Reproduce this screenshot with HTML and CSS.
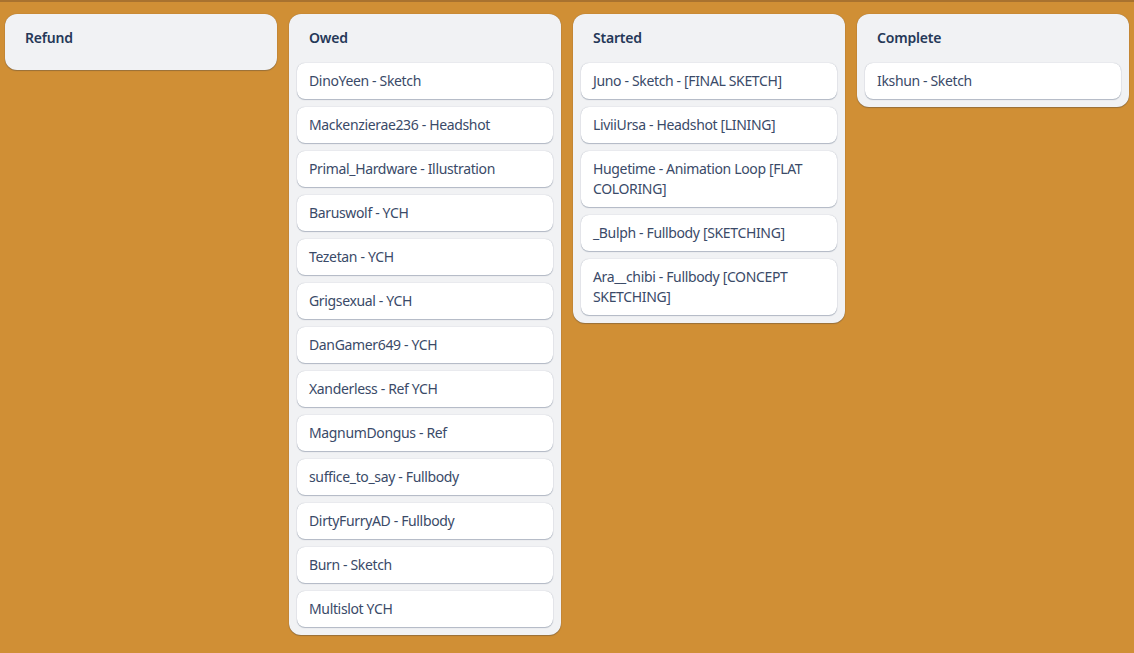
FILE: index.html
```html
<!DOCTYPE html>
<html>
<head>
<meta charset="utf-8">
<link rel="stylesheet" href="styles.css">
</head>
<body>
<div class="topbar"></div>
<main class="board">
  <section class="list">
    <h2 class="list-title">Refund</h2>
  </section>
  <section class="list">
    <h2 class="list-title">Owed</h2>
    <ol class="cards">
      <li class="card">DinoYeen - Sketch</li>
      <li class="card">Mackenzierae236 - Headshot</li>
      <li class="card">Primal_Hardware - Illustration</li>
      <li class="card">Baruswolf - YCH</li>
      <li class="card">Tezetan - YCH</li>
      <li class="card">Grigsexual - YCH</li>
      <li class="card">DanGamer649 - YCH</li>
      <li class="card">Xanderless - Ref YCH</li>
      <li class="card">MagnumDongus - Ref</li>
      <li class="card">suffice_to_say - Fullbody</li>
      <li class="card">DirtyFurryAD - Fullbody</li>
      <li class="card">Burn - Sketch</li>
      <li class="card">Multislot YCH</li>
    </ol>
  </section>
  <section class="list">
    <h2 class="list-title">Started</h2>
    <ol class="cards">
      <li class="card">Juno - Sketch - [FINAL SKETCH]</li>
      <li class="card">LiviiUrsa - Headshot [LINING]</li>
      <li class="card">Hugetime - Animation Loop [FLAT COLORING]</li>
      <li class="card">_Bulph - Fullbody [SKETCHING]</li>
      <li class="card">Ara__chibi - Fullbody [CONCEPT SKETCHING]</li>
    </ol>
  </section>
  <section class="list">
    <h2 class="list-title">Complete</h2>
    <ol class="cards">
      <li class="card">Ikshun - Sketch</li>
    </ol>
  </section>
</main>
</body>
</html>
```

FILE: styles.css
```css
html, body {
  margin: 0;
  padding: 0;
  height: 100%;
}
body {
  background: #d08f35;
  font-family: "Noto Sans", "Open Sans", sans-serif;
  color: #172b4d;
  overflow: hidden;
}
.topbar {
  height: 2px;
  background: #a8722f;
}
.board {
  display: flex;
  align-items: flex-start;
  gap: 12px;
  padding: 12px 5px;
}
.list {
  width: 272px;
  flex: 0 0 272px;
  background: #f1f2f4;
  border-radius: 12px;
  box-shadow: 0 1px 1px rgba(9, 30, 66, 0.25), 0 0 1px rgba(9, 30, 66, 0.31);
  padding-bottom: 8px;
}
.list-title {
  margin: 0;
  height: 48px;
  box-sizing: border-box;
  padding: 14px 20px 0;
  font-size: 14px;
  line-height: 20px;
  font-weight: 600;
  letter-spacing: -0.2px;
  color: #253858;
}
.cards {
  list-style: none;
  margin: 0;
  padding: 1px 8px 0;
  display: flex;
  flex-direction: column;
  gap: 8px;
}
.card {
  background: #ffffff;
  border-radius: 8px;
  padding: 8px 12px;
  font-size: 14px;
  line-height: 20px;
  letter-spacing: -0.35px;
  color: #3a4a68;
  box-shadow: 0 1px 1px rgba(9, 30, 66, 0.25), 0 0 1px rgba(9, 30, 66, 0.31);
}
```
